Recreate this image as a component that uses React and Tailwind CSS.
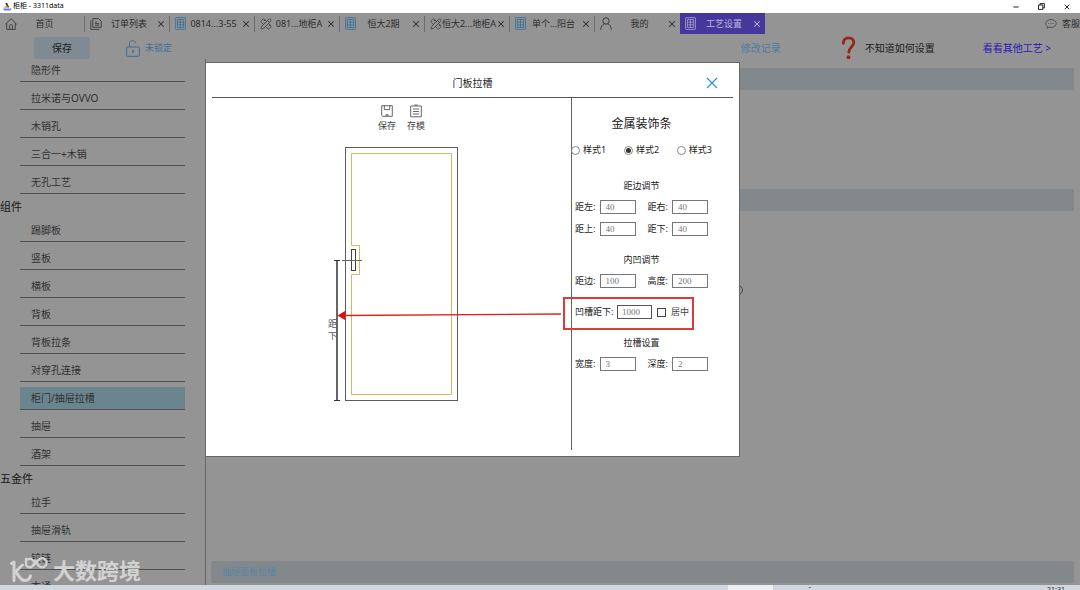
import React, { useState } from "react";
import { PencilRuler, X, Minus } from "lucide-react";

function HomeIcon() {
  return (
    <svg viewBox="0 0 12 12" className="h-3 w-3 shrink-0" fill="none" stroke="#3a3a3a" strokeWidth="0.9">
      <path d="M0.4 6.2 6 0.7l5.6 5.5M1.7 5.2v6.2h8.6V5.2M4.6 11.4V7.6c0-.6.4-.9.9-.9h1c.5 0 .9.3.9.9v3.8" />
    </svg>
  );
}

function OrdersIcon() {
  return (
    <svg viewBox="0 0 12 12" className="h-3 w-3 shrink-0" fill="none" stroke="#3a3a3a" strokeWidth="0.9">
      <path d="M2.8.6h5.800l2.700 2.700v6H2.800zM.8 2.400v9h8.600M5 4h2M5 5.600h4.200M5 7.200h4.200" />
    </svg>
  );
}

function CabinetIcon({ color }) {
  return (
    <svg viewBox="0 0 12 14" className="h-[13px] w-[11px] shrink-0" fill="none" stroke={color} strokeWidth="0.9">
      <rect x="0.6" y="0.6" width="10.8" height="12.8" rx="0.6" />
      <path d="M2.6 2.6h6.8v8.8H2.6zM6 2.6v8.8M2.6 5.5h6.8M2.6 8.5h6.8" />
    </svg>
  );
}

function PersonIcon() {
  return (
    <svg viewBox="0 0 12 13" className="h-[13px] w-3 shrink-0" fill="none" stroke="#333" strokeWidth="0.9">
      <circle cx="6" cy="4" r="3.2" />
      <path d="M.6 12.6C.8 9.6 2.6 7.4 4.4 6.8M11.4 12.6c-.2-3-2-5.2-3.8-5.8" />
    </svg>
  );
}

const tabs = [
  { label: "订单列表", icon: <OrdersIcon /> },
  { label: "0814...3-55", icon: <CabinetIcon color="#34719b" /> },
  { label: "081...地柜A", icon: <PencilRuler className="h-3 w-3 shrink-0" color="#444" strokeWidth={1.8} /> },
  { label: "恒大2期", icon: <CabinetIcon color="#34719b" /> },
  { label: "恒大2...地柜A", icon: <PencilRuler className="h-3 w-3 shrink-0" color="#444" strokeWidth={1.8} /> },
  { label: "单个...阳台", icon: <CabinetIcon color="#34719b" /> },
  { label: "我的", icon: <PersonIcon /> },
  { label: "工艺设置", icon: <CabinetIcon color="#a59fd0" />, active: true },
];

const groups = [
  { title: null, items: ["隐形件", "拉米诺与OVVO", "木销孔", "三合一+木销", "无孔工艺"] },
  { title: "组件", items: ["踢脚板", "竖板", "横板", "背板", "背板拉条", "对穿孔连接", "柜门/抽屉拉槽", "抽屉", "酒架"] },
  { title: "五金件", items: ["拉手", "抽屉滑轨", "铰链", "衣通"] },
];

function TitleBar() {
  return (
    <header className="flex h-[13px] shrink-0 items-center bg-white pl-[3px] pr-[9px] text-[7px] text-black">
      <svg viewBox="0 0 9 9" className="mr-[1px] h-[9px] w-[9px]">
        <path d="M0 6.6h8.6L7.4 8.4H1.2z" fill="#6a7fd6" />
        <path d="M2.4 1h1.8l2 4.6H4z" fill="#333" />
        <path d="M1.8 4.4 4 3.2l1.2 2.6H1z" fill="#d9a05a" />
      </svg>
      <span>柜柜 - 3311data</span>
      <div className="ml-auto flex items-center gap-[18px]">
        <button aria-label="最小化"><Minus className="h-2 w-2" strokeWidth={2.5} /></button>
        <button aria-label="还原">
          <svg viewBox="0 0 7 7" className="h-[7px] w-[7px]" fill="none" stroke="#222" strokeWidth="1">
            <path d="M.5 2h4.3v4.4H.5zM2 2V.6h4.4v4.3H4.8" />
          </svg>
        </button>
        <button aria-label="关闭窗口"><X className="h-2 w-2" strokeWidth={2.5} /></button>
      </div>
    </header>
  );
}

function TabBar() {
  return (
    <nav className="flex h-[21px] shrink-0 overflow-hidden text-[9px] text-[#2c2c2c]">
      <div className="flex w-[85px] shrink-0 items-center pl-[5px]">
        <HomeIcon />
        <button className="flex-1 pr-3 text-center">首页</button>
        <i className="h-4 w-px shrink-0 bg-[#6c6c6c]" />
      </div>
      {tabs.map((t, i) => (
        <div
          key={t.label}
          className={
            "flex w-[85px] shrink-0 items-center pl-[5px] " + (t.active ? "bg-[#45389a] text-[#b9b5dc]" : "")
          }
        >
          {t.icon}
          <button className="flex min-w-0 flex-1 justify-center whitespace-nowrap">{t.label}</button>
          <button aria-label={"关闭" + t.label} className="mr-[3px] shrink-0">
            <X className="h-[10px] w-[10px]" strokeWidth={2.5} />
          </button>
          {i < 6 && <i className="h-4 w-px shrink-0 bg-[#6c6c6c]" />}
        </div>
      ))}
      <button className="ml-auto flex shrink-0 items-center gap-[5px]">
        <svg viewBox="0 0 12 10" className="h-[10px] w-3" fill="none" stroke="#444" strokeWidth="0.8">
          <path d="M6 .6c3 0 5.3 1.7 5.3 3.9S9 8.4 6 8.4c-.7 0-1.300-.1-1.900-.3L2 9.300l.3-1.900C1.300 6.700.7 5.700.7 4.500.7 2.300 3 .6 6 .6z" />
          <path d="M3.300 4.500h1M5.500 4.500h1M7.700 4.500h1" />
        </svg>
        客服
      </button>
    </nav>
  );
}

function Toolbar() {
  return (
    <div className="flex h-[25px] shrink-0 items-center pl-[34px] pr-[29px] pt-[3px] text-[10px] text-[#1c1c1c]">
      <button className="h-[22px] w-14 rounded-[2px] bg-[#808a93]">保存</button>
      <button className="ml-9 flex items-center gap-[5px] text-[9px] text-[#456f96]">
        <svg viewBox="0 0 14 17" className="h-[17px] w-[14px]" fill="none" stroke="#3c6d97" strokeWidth="1">
          <rect x="0.6" y="7" width="12.800" height="9.300" rx="0.8" />
          <path d="M3.500 7V3.700C3.500 1.900 4.800.7 6.500.7s3 1.200 3.200 2.600M7 10v3.500M5.800 11.300h2.400" />
        </svg>
        未锁定
      </button>
      <button className="ml-auto text-[#4d7ba0]">修改记录</button>
      <svg viewBox="0 0 15 24" className="ml-[60px] h-6 w-[15px] shrink-0">
        <path d="M2.300 7.200C2.300 3.600 4.500 1.900 7.500 1.900s5.300 1.700 5.300 4.700c0 4-5 4.700-5 9.600" fill="none" stroke="#962412" strokeWidth="2.800" strokeLinecap="round" />
        <circle cx="7.500" cy="21.200" r="1.900" fill="#962412" />
      </svg>
      <span className="ml-[9px]">不知道如何设置</span>
      <a href="#crafts" className="ml-12 text-[#2b16b4]">看看其他工艺 &gt;</a>
    </div>
  );
}

function Sidebar() {
  return (
    <aside className="w-[205px] shrink-0 overflow-hidden">
      {groups.map((g, gi) => (
        <section key={gi}>
          {g.title && <h2 className="flex h-5 items-end text-[11px] leading-[14px] text-[#161616]">{g.title}</h2>}
          <ul className={"flex flex-col gap-[5px] pl-5 pr-5 " + (g.title ? "pt-[5px]" : "")}>
            {g.items.map((it) => (
              <li key={it}>
                <button
                  className={
                    "block h-[23px] w-full border-b border-[#505050] pl-[11px] text-left text-[10px] text-[#303030] " +
                    (it === "柜门/抽屉拉槽" ? "bg-[#6b858f]" : "")
                  }
                >
                  {it}
                </button>
              </li>
            ))}
          </ul>
        </section>
      ))}
    </aside>
  );
}

function DoorDrawing() {
  return (
    <svg viewBox="312 140 160 268" className="h-[268px] w-40" fill="none">
      <rect x="345.500" y="147.500" width="112" height="253" stroke="#5c5c62" />
      <path d="M351.500 153.500H451.500V394.500H351.500V274.500H359.500V245.500H351.500z" stroke="#d6b860" />
      <rect x="351.500" y="249.500" width="4" height="21" stroke="#444" />
      <path d="M342 260.500h20" stroke="#666" />
      <path d="M337 260v141" stroke="#333" strokeWidth="1.500" />
      <path d="M334 260.500h6M334 400.500h6" stroke="#333" />
      <text x="328" y="327" fontSize="9" fill="#555">距</text>
      <text x="328" y="339" fontSize="9" fill="#555">下</text>
    </svg>
  );
}

function Field({ id, label, value }) {
  const [v, setV] = useState(value);
  return (
    <div className="flex h-[14px] items-center justify-between">
      <label htmlFor={id}>{label}:</label>
      <input
        id={id}
        value={v}
        onChange={(e) => setV(e.target.value)}
        className="h-[14px] w-9 border border-[#777] bg-white pl-[5px] font-['Liberation_Serif','Noto_Sans_CJK_SC',serif] text-[9px] text-[#777] outline-none"
      />
    </div>
  );
}

function FormPane() {
  const [style, setStyle] = useState("样式2");
  const [depth, setDepth] = useState("1000");
  return (
    <form className="w-[162px] shrink-0 border-l border-[#666] pl-[3px] pt-4 text-[9px] leading-3 text-[#1a1a1a]">
      <div className="w-[133px]">
        <h3 className="text-center text-[12px] leading-5">金属装饰条</h3>
        <div className="-mx-1 mt-2 flex h-4 items-center justify-between">
          {["样式1", "样式2", "样式3"].map((s) => (
            <label key={s} className="flex items-center gap-[3px]">
              <input
                type="radio"
                name="style"
                checked={style === s}
                onChange={() => setStyle(s)}
                className="h-[9px] w-[9px] appearance-none rounded-full border border-[#888] bg-white bg-clip-content p-[1px] checked:bg-[#333]"
              />
              {s}
            </label>
          ))}
        </div>
        <h4 className="mt-[22px] text-center">距边调节</h4>
        <div className="mt-2 grid grid-cols-2 gap-x-3 gap-y-2">
          <Field id="left" label="距左" value="40" />
          <Field id="right" label="距右" value="40" />
          <Field id="top" label="距上" value="40" />
          <Field id="bottom" label="距下" value="40" />
        </div>
        <h4 className="mt-[18px] text-center">内凹调节</h4>
        <div className="mt-2 grid grid-cols-2 gap-x-3">
          <Field id="edge" label="距边" value="100" />
          <Field id="height" label="高度" value="200" />
        </div>
        <div className="relative mt-[17px] flex h-[14px] items-center whitespace-nowrap">
          <label htmlFor="groove" className="w-[42px]">凹槽距下:</label>
          <input
            id="groove"
            value={depth}
            onChange={(e) => setDepth(e.target.value)}
            className="h-[14px] w-[35px] border border-[#555] bg-white pl-1 font-['Liberation_Serif','Noto_Sans_CJK_SC',serif] text-[9px] text-[#777] outline-none"
          />
          <label className="ml-[5px] flex items-center gap-[5px] text-[#444]">
            <input type="checkbox" className="h-[9px] w-[9px] appearance-none border border-[#444] bg-white" />
            居中
          </label>
          <div className="pointer-events-none absolute -left-3 -top-2 h-[33px] w-[131px] border-2 border-[#dd3b38]" />
          <svg viewBox="336 308 226 16" className="pointer-events-none absolute -left-[239px] top-[3px] h-4 w-[226px]">
            <path d="M344 315.500 561 314" stroke="#e0201c" strokeWidth="1.400" />
            <path d="M337.500 315.500 345 311v9z" fill="#f00808" />
          </svg>
        </div>
        <h4 className="mt-[18px] text-center">拉槽设置</h4>
        <div className="mt-2 grid grid-cols-2 gap-x-3">
          <Field id="width" label="宽度" value="3" />
          <Field id="depth" label="深度" value="2" />
        </div>
      </div>
    </form>
  );
}

function GrooveDialog() {
  return (
    <div
      role="dialog"
      aria-label="门板拉槽"
      className="absolute left-[205px] top-[3px] flex h-[395px] w-[535px] flex-col border border-[#666] bg-white px-[6px] pb-[6px]"
    >
      <div className="relative flex h-[35px] shrink-0 items-center justify-center border-b border-[#555] pt-[6px] text-[10px] text-[#1a1a1a]">
        <h2>门板拉槽</h2>
        <button aria-label="关闭" className="absolute right-[14px] top-[13px]">
          <svg viewBox="0 0 14 14" className="h-[14px] w-[14px]" stroke="#2f93cf" strokeWidth="1.300">
            <path d="m2 2 10 10M12 2 2 12" />
          </svg>
        </button>
      </div>
      <div className="flex flex-1">
        <div className="flex flex-1 flex-col items-center pt-[6px]">
          <div className="flex pl-5 text-[9px] leading-3 text-[#444]">
            <button className="flex w-[29px] flex-col items-center gap-[2px]">
              <svg viewBox="0 0 12 13" className="h-[14px] w-3" fill="none" stroke="#555" strokeWidth="0.900">
                <path d="M.7 1.200h10.600v10.600H1.500L.7 11zM3.300 1.200v3.900h5.400V1.200M5 11.800v-1.600h2v1.600" />
              </svg>
              保存
            </button>
            <button className="flex w-[29px] flex-col items-center gap-[2px]">
              <svg viewBox="0 0 12 13" className="h-[14px] w-3" fill="none" stroke="#555" strokeWidth="0.900">
                <path d="M.7 1.500h10.600v10.800H.7zM3 4.500h6M3 7h6M3 9.500h6M4 .6h4" />
              </svg>
              存模
            </button>
          </div>
          <div className="mt-2">
            <DoorDrawing />
          </div>
        </div>
        <FormPane />
      </div>
    </div>
  );
}

function Watermark() {
  return (
    <div className="pointer-events-none absolute bottom-[1px] left-[10px] flex items-center gap-[5px] text-[22px] font-bold leading-7 text-[#d2d2d2]">
      <svg viewBox="0 0 38 26" className="h-[26px] w-[38px]" fill="none" stroke="#d2d2d2" strokeLinecap="round" strokeLinejoin="round">
        <path d="M1.500 6.500 4 5V23.500M12.500 8 5.500 14.500l4 5.500c3 5 9.500 4.500 11-1" strokeWidth="3" />
        <path d="M16 2V8a4.200 4.200 0 1 0 1.500-5.500M24.500 7.500c1.500-1.500 2.500-3.500 4.500-5a4.500 4.500 0 1 1 0 6.500c-1.500-1-2.500-4-4-5.500" strokeWidth="2.300" />
      </svg>
      <span>大数跨境</span>
    </div>
  );
}

export default function App() {
  return (
    <div className="flex h-screen flex-col overflow-hidden bg-[#949494] font-['Noto_Sans','Noto_Sans_CJK_SC',sans-serif]">
      <TitleBar />
      <TabBar />
      <Toolbar />
      <div className="relative flex min-h-0 flex-1">
        <Sidebar />
        <main className="flex flex-1 flex-col border-l border-[#666] pb-[2px] pl-[5px] pr-[6px] pt-[9px]">
          <div className="h-[22px] bg-[#83888c]" />
          <div className="mt-[99px] h-[22px] bg-[#83888c]" />
          <svg viewBox="0 0 10 10" className="ml-[522px] mt-[74px] h-[10px] w-[10px]" fill="none" stroke="#444">
            <circle cx="5" cy="5" r="4.500" />
          </svg>
          <div className="mt-auto flex h-[22px] items-center bg-[#83888c] pl-[11px] text-[9px] text-[#5684a8]">
            抽屉面板拉槽
          </div>
        </main>
        <GrooveDialog />
        <Watermark />
      </div>
      <footer className="flex h-[5px] shrink-0 justify-end overflow-hidden bg-[#cfd7e0] pr-[15px] text-[7px] leading-[10px] text-[#222]">
        <div className="h-full w-[45px] bg-[#eceff3]" />
        <span className="ml-[35px]">ˇ</span>
        <span className="ml-[236px]">21:31</span>
      </footer>
    </div>
  );
}
